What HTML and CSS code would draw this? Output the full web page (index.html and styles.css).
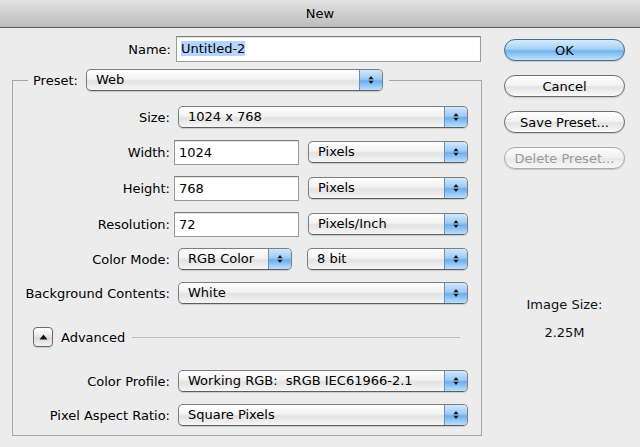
FILE: index.html
```html
<!DOCTYPE html>
<html lang="en">
<head>
    <meta charset="UTF-8">
    <title>New</title>
    <link rel="stylesheet" href="styles.css">
</head>
<body>
    <div class="titlebar">New</div>

    <div class="dialog">
        <div class="main">
            <!-- Name -->
            <div class="name-row">
                <span class="label name-label">Name:</span>
                <div class="field name-field"><span class="selected">Untitled-2</span></div>
            </div>

            <!-- Preset group -->
            <fieldset class="preset-box">
                <legend class="preset">
                    <span class="preset-label">Preset:</span>
                    <div class="select preset-select">
                        <span class="select-text">Web</span>
                        <span class="arrows"><svg width="6" height="10" viewBox="0 0 6 10"><path d="M3 1 L5.6 4.2 L0.4 4.2 Z M0.4 5.8 L5.6 5.8 L3 9 Z" fill="#1a1a1a"/></svg></span>
                    </div>
                </legend>

                <div class="row row-size">
                    <span class="label">Size:</span>
                    <div class="select wide">
                        <span class="select-text">1024 x 768</span>
                        <span class="arrows"><svg width="6" height="10" viewBox="0 0 6 10"><path d="M3 1 L5.6 4.2 L0.4 4.2 Z M0.4 5.8 L5.6 5.8 L3 9 Z" fill="#1a1a1a"/></svg></span>
                    </div>
                </div>

                <div class="row row-width">
                    <span class="label">Width:</span>
                    <div class="field num">1024</div>
                    <div class="select unit">
                        <span class="select-text">Pixels</span>
                        <span class="arrows"><svg width="6" height="10" viewBox="0 0 6 10"><path d="M3 1 L5.6 4.2 L0.4 4.2 Z M0.4 5.8 L5.6 5.8 L3 9 Z" fill="#1a1a1a"/></svg></span>
                    </div>
                </div>

                <div class="row row-height">
                    <span class="label">Height:</span>
                    <div class="field num">768</div>
                    <div class="select unit">
                        <span class="select-text">Pixels</span>
                        <span class="arrows"><svg width="6" height="10" viewBox="0 0 6 10"><path d="M3 1 L5.6 4.2 L0.4 4.2 Z M0.4 5.8 L5.6 5.8 L3 9 Z" fill="#1a1a1a"/></svg></span>
                    </div>
                </div>

                <div class="row row-res">
                    <span class="label">Resolution:</span>
                    <div class="field num">72</div>
                    <div class="select unit">
                        <span class="select-text">Pixels/Inch</span>
                        <span class="arrows"><svg width="6" height="10" viewBox="0 0 6 10"><path d="M3 1 L5.6 4.2 L0.4 4.2 Z M0.4 5.8 L5.6 5.8 L3 9 Z" fill="#1a1a1a"/></svg></span>
                    </div>
                </div>

                <div class="row row-mode">
                    <span class="label">Color Mode:</span>
                    <div class="select mode">
                        <span class="select-text">RGB Color</span>
                        <span class="arrows"><svg width="6" height="10" viewBox="0 0 6 10"><path d="M3 1 L5.6 4.2 L0.4 4.2 Z M0.4 5.8 L5.6 5.8 L3 9 Z" fill="#1a1a1a"/></svg></span>
                    </div>
                    <div class="select bits">
                        <span class="select-text">8 bit</span>
                        <span class="arrows"><svg width="6" height="10" viewBox="0 0 6 10"><path d="M3 1 L5.6 4.2 L0.4 4.2 Z M0.4 5.8 L5.6 5.8 L3 9 Z" fill="#1a1a1a"/></svg></span>
                    </div>
                </div>

                <div class="row row-bg">
                    <span class="label">Background Contents:</span>
                    <div class="select wide">
                        <span class="select-text">White</span>
                        <span class="arrows"><svg width="6" height="10" viewBox="0 0 6 10"><path d="M3 1 L5.6 4.2 L0.4 4.2 Z M0.4 5.8 L5.6 5.8 L3 9 Z" fill="#1a1a1a"/></svg></span>
                    </div>
                </div>

                <!-- Advanced disclosure -->
                <div class="row row-adv">
                    <div class="disclosure"><svg width="9" height="6" viewBox="0 0 9 6"><path d="M4.5 0.5 L8.5 5.5 L0.5 5.5 Z" fill="#111"/></svg></div>
                    <span class="adv-text">Advanced</span>
                    <div class="adv-line"></div>
                </div>

                <div class="row row-profile">
                    <span class="label">Color Profile:</span>
                    <div class="select wide">
                        <span class="select-text">Working RGB:&nbsp; sRGB IEC61966-2.1</span>
                        <span class="arrows"><svg width="6" height="10" viewBox="0 0 6 10"><path d="M3 1 L5.6 4.2 L0.4 4.2 Z M0.4 5.8 L5.6 5.8 L3 9 Z" fill="#1a1a1a"/></svg></span>
                    </div>
                </div>

                <div class="row row-par">
                    <span class="label">Pixel Aspect Ratio:</span>
                    <div class="select wide">
                        <span class="select-text">Square Pixels</span>
                        <span class="arrows"><svg width="6" height="10" viewBox="0 0 6 10"><path d="M3 1 L5.6 4.2 L0.4 4.2 Z M0.4 5.8 L5.6 5.8 L3 9 Z" fill="#1a1a1a"/></svg></span>
                    </div>
                </div>
            </fieldset>
        </div>

        <!-- Buttons -->
        <div class="side">
            <button class="btn btn-default">OK</button>
            <button class="btn">Cancel</button>
            <button class="btn">Save Preset...</button>
            <button class="btn" disabled>Delete Preset...</button>

            <div class="image-size">
                <div>Image Size:</div>
                <div class="image-size-value">2.25M</div>
            </div>
        </div>
    </div>
</body>
</html>
```

FILE: styles.css
```css
body {
    margin: 0;
    width: 640px;
    height: 447px;
    overflow: hidden;
    background-color: #ececec;
    font-family: "DejaVu Sans", sans-serif;
    font-size: 13px;
    color: #000;
}
.titlebar {
    height: 27px;
    line-height: 28px;
    text-align: center;
    background: linear-gradient(#e2e2e2, #bcbcbc);
    border-bottom: 1px solid #5c5c5c;
}
.dialog {
    display: flex;
}
.main {
    width: 470px;
    padding: 8px 0 0 12px;
}
.label {
    text-align: right;
    white-space: nowrap;
}
.name-row {
    display: flex;
    align-items: center;
    height: 26px;
}
.name-label {
    width: 159px;
    margin-right: 5px;
}
.field {
    box-sizing: border-box;
    height: 25px;
    line-height: 23px;
    padding-left: 4px;
    background-color: #fff;
    border: 1px solid #9a9a9a;
    border-top-color: #7d7d7d;
    box-shadow: inset 0 1px 1px rgba(0, 0, 0, 0.12);
}
.name-field {
    width: 305px;
    height: 26px;
    line-height: 24px;
}
.selected {
    background-color: #b5d5ff;
}

/* Preset fieldset */
.preset-box {
    box-sizing: border-box;
    width: 470px;
    margin: 7px 0 0 0;
    padding: 13px 0 7px 0;
    border: 1px solid #a6a6a6;
    min-width: 0;
}
.preset {
    display: flex;
    align-items: center;
    margin-left: 15px;
    padding: 0 6px 0 5px;
}
.preset-label {
    margin-right: 8px;
}
.preset-select {
    width: 297px;
}

/* Select (popup) */
.select {
    box-sizing: border-box;
    display: flex;
    height: 22px;
    border: 1px solid #7e7e7e;
    border-bottom-color: #5e5e5e;
    border-radius: 5px;
    overflow: hidden;
    background: linear-gradient(#ffffff 0%, #f2f2f2 45%, #e2e2e2 55%, #f6f6f6 100%);
    box-shadow: 0 1px 1px rgba(0, 0, 0, 0.15);
}
.select-text {
    flex: 1;
    line-height: 20px;
    padding-left: 9px;
    white-space: nowrap;
}
.arrows {
    width: 22px;
    display: flex;
    align-items: center;
    justify-content: center;
    border-left: 1px solid #6a8fb8;
    background: linear-gradient(#d2e8fd 0%, #9ccaf6 45%, #6eaeeb 55%, #b9e0ff 100%);
}

/* Rows */
.row {
    display: flex;
    align-items: center;
    height: 26px;
}
.row .label {
    width: 157px;
    margin-right: 4px;
}
.row .select {
    margin-left: 4px;
}
.row-width { margin-top: 9px; }
.row-height { margin-top: 10px; }
.row-res { margin-top: 10px; }
.row-mode { margin-top: 9px; }
.row-bg { margin-top: 8px; }
.row-adv { margin-top: 18px; }
.row-profile { margin-top: 18px; }
.row-par { margin-top: 8px; }

.wide { width: 290px; }
.num { width: 125px; }
.unit {
    width: 160px;
    margin-left: 9px !important;
}
.mode { width: 114px; }
.bits {
    width: 161px;
    margin-left: 15px !important;
}

/* Advanced */
.disclosure {
    box-sizing: border-box;
    width: 20px;
    height: 20px;
    margin-left: 20px;
    display: flex;
    align-items: center;
    justify-content: center;
    border: 1px solid #6a6a6a;
    border-radius: 4px;
    background: linear-gradient(#ffffff, #e6e6e6 50%, #d8d8d8 51%, #f2f2f2);
    box-shadow: 0 1px 1px rgba(0, 0, 0, 0.15);
}
.adv-text {
    margin-left: 8px;
}
.adv-line {
    flex: 1;
    height: 1px;
    margin: 0 21px 0 7px;
    background-color: #bdbdbd;
}

/* Side buttons */
.side {
    width: 121px;
    margin-left: 22px;
    padding-top: 11px;
    display: flex;
    flex-direction: column;
}
.btn {
    box-sizing: border-box;
    height: 22px;
    margin-bottom: 14px;
    padding: 0;
    font-family: inherit;
    font-size: 13px;
    color: #000;
    border: 1px solid #6e6e6e;
    border-radius: 11px;
    background: linear-gradient(#ffffff 0%, #f4f4f4 45%, #e3e3e3 55%, #fbfbfb 100%);
    box-shadow: 0 1px 1px rgba(0, 0, 0, 0.15);
}
.btn-default {
    border-color: #4a6b93;
    background: linear-gradient(#d6ebfd 0%, #a7d1f6 45%, #72b3ee 55%, #bfe4ff 100%);
}
.btn:disabled {
    color: #9a9a9a;
    border-color: #aaaaaa;
    background: linear-gradient(#fbfbfb, #f0f0f0 50%, #e8e8e8 51%, #f6f6f6);
}
.image-size {
    margin-top: 114px;
    text-align: center;
    line-height: 16px;
    color: #111;
}
.image-size-value {
    margin-top: 12px;
}
```
